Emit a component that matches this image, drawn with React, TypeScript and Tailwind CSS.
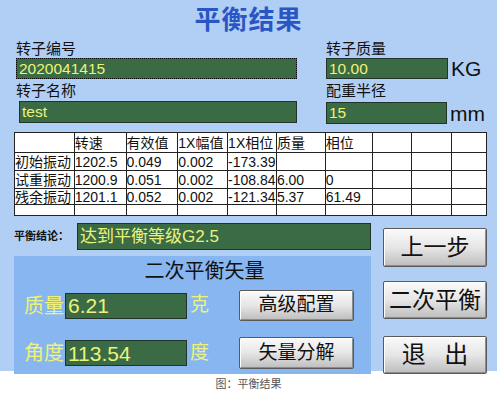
const cjk = "font-['Liberation_Sans','Noto_Sans_CJK_SC',sans-serif]";

const cols = [60, 52, 52, 50, 49, 49, 48, 39, 40, 34];
const rows = [
  ["", "转速", "有效值", "1X幅值", "1X相位", "质量", "相位", "", "", ""],
  ["初始振动", "1202.5", "0.049", "0.002", "-173.39", "", "", "", "", ""],
  ["试重振动", "1200.9", "0.051", "0.002", "-108.84", "6.00", "0", "", "", ""],
  ["残余振动", "1201.1", "0.052", "0.002", "-121.34", "5.37", "61.49", "", "", ""],
  ["", "", "", "", "", "", "", "", "", ""],
];
const rowH = [20, 18, 18, 16, 10];

function Field({ value, className }: { value: string; className: string }) {
  return (
    <div
      className={`bg-[#3a6b45] border border-[#22332a] text-[#eef27a] text-[15.5px] leading-none flex items-center pl-[2px] ${className}`}
    >
      {value}
    </div>
  );
}

function Btn({ label, className }: { label: string; className: string }) {
  return (
    <div
      className={`flex items-center justify-center border border-[#5a5a5a] rounded-[2px] bg-gradient-to-b from-[#fafafa] via-[#e6e6e6] to-[#bdbdbd] shadow-[inset_1px_1px_0_#ffffff,inset_-1px_-1px_0_#8c8c8c] text-[#111] ${className}`}
    >
      {label}
    </div>
  );
}

export default function App() {
  return (
    <div className={`w-[499px] h-[398px] bg-white ${cjk}`}>
      <div className="w-[497px] h-[371px] bg-[#b1cff5] flex flex-col">
        <div className="h-[40px] flex items-center justify-center text-[26px] font-bold text-[#2a56c4] tracking-[1px] pt-[1px]">
          平衡结果
        </div>

        <div className="flex">
          <div className="w-[310px] pl-[16px]">
            <div className="h-[18px] text-[15px] leading-[18px] text-[#111]">转子编号</div>
            <Field value="2020041415" className="w-[281px] h-[21px] border-dotted border-black" />
            <div className="h-[22px] pt-[2px] text-[15px] leading-[20px] text-[#111]">转子名称</div>
            <Field value="test" className="ml-[3px] w-[278px] h-[22px]" />
          </div>
          <div className="pl-[16px]">
            <div className="h-[18px] text-[15px] leading-[18px] text-[#111]">转子质量</div>
            <div className="flex items-center">
              <Field value="10.00" className="w-[122px] h-[21px]" />
              <span className="ml-[3px] text-[21px] leading-none text-[#111]">KG</span>
            </div>
            <div className="h-[23px] pt-[2px] text-[15px] leading-[20px] text-[#111]">配重半径</div>
            <div className="flex items-center">
              <Field value="15" className="w-[121px] h-[22px]" />
              <span className="ml-[3px] text-[21px] leading-none text-[#111]">mm</span>
            </div>
          </div>
        </div>

        <div className="ml-[14px] mt-[8px] w-[473px] border border-[#222] bg-white">
          {rows.map((r, i) => (
            <div key={i} className="flex border-b border-[#222] last:border-b-0" style={{ height: rowH[i] }}>
              {r.map((c, j) => (
                <div
                  key={j}
                  className="border-r border-[#222] last:border-r-0 text-[14px] leading-none flex items-center text-[#111] whitespace-nowrap overflow-hidden"
                  style={{ width: cols[j] }}
                >
                  {c}
                </div>
              ))}
            </div>
          ))}
        </div>

        <div className="flex mt-[5px] flex-1">
          <div className="w-[371px] flex flex-col">
            <div className="flex items-center h-[28px] mt-[1px]">
              <span className="pl-[14px] w-[77px] text-[11px] font-bold text-[#111]">平衡结论：</span>
              <Field value="达到平衡等级G2.5" className="w-[294px] h-[27px] text-[17px] pl-[2px]" />
            </div>
            <div className="ml-[14px] mt-[6px] flex-1 bg-[#87b6f0] flex flex-col">
              <div className="text-center text-[20px] text-[#111] pt-[3px] h-[32px] leading-[24px] pl-[24px]">
                二次平衡矢量
              </div>
              <div className="flex items-center mt-[2px]">
                <span className="pl-[10px] w-[51px] text-[20px] leading-none text-[#eef27a]">质量</span>
                <Field value="6.21" className="w-[122px] h-[26px] text-[21px]" />
                <span className="ml-[3px] text-[19px] text-[#eef27a]">克</span>
                <Btn label="高级配置" className="ml-[30px] w-[115px] h-[31px] text-[19px]" />
              </div>
              <div className="flex items-center mt-[16px]">
                <span className="pl-[10px] w-[51px] text-[20px] leading-none text-[#eef27a]">角度</span>
                <Field value="113.54" className="w-[122px] h-[26px] text-[21px]" />
                <span className="ml-[3px] text-[19px] text-[#eef27a]">度</span>
                <Btn label="矢量分解" className="ml-[30px] w-[115px] h-[32px] text-[19px]" />
              </div>
            </div>
          </div>
          <div className="ml-[12px] flex flex-col pt-[7px]">
            <Btn label="上一步" className="w-[104px] h-[39px] text-[23px]" />
            <Btn label="二次平衡" className="mt-[14px] w-[104px] h-[38px] text-[23px]" />
            <Btn label="退 出" className="mt-[17px] w-[104px] h-[38px] text-[24px] tracking-[6px] pl-[6px]" />
          </div>
        </div>
      </div>
      <div className="h-[27px] flex items-center justify-center text-[11px] text-[#555] pr-[2px]">
        图：平衡结果
      </div>
    </div>
  );
}
